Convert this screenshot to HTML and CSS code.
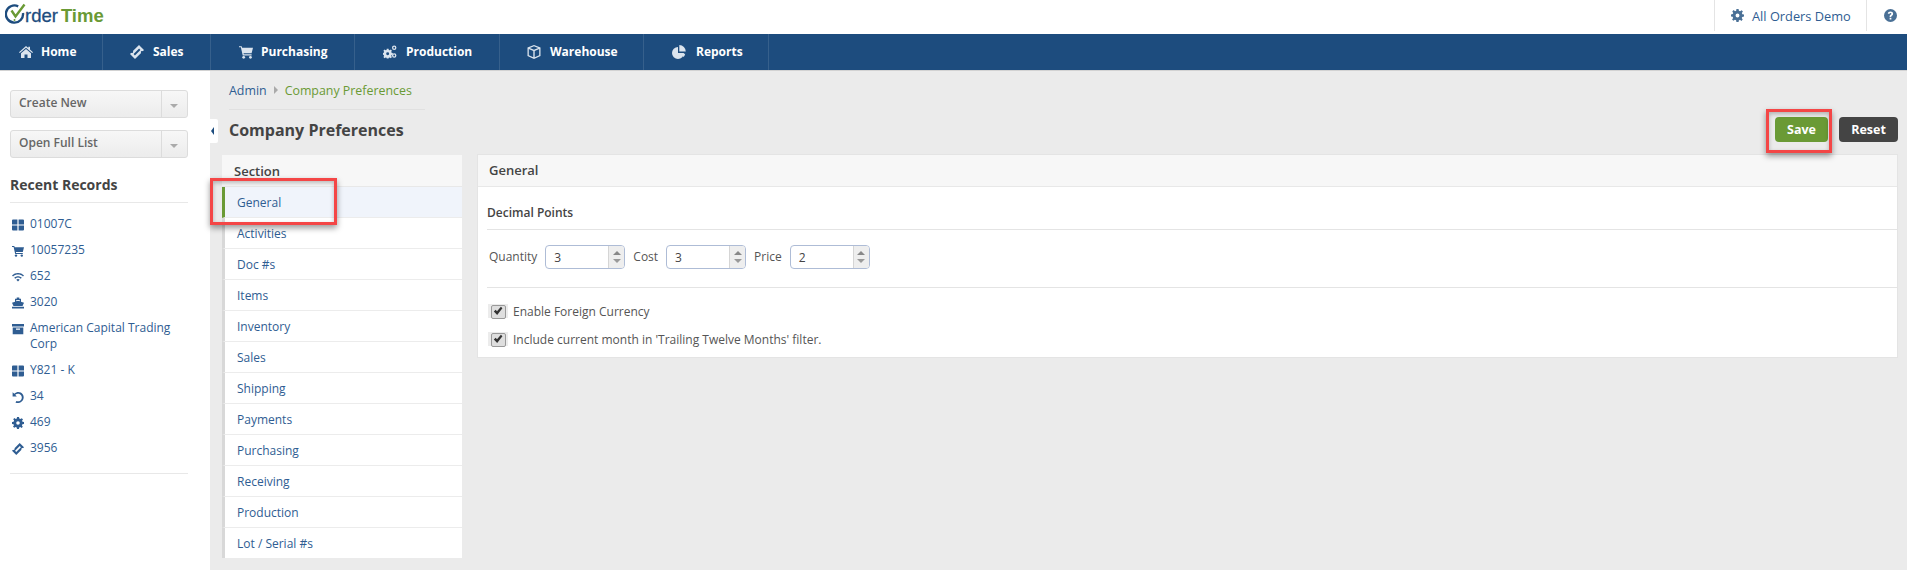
FILE: index.html
```html
<!DOCTYPE html>
<html lang="en">
<head>
<meta charset="utf-8">
<title>Company Preferences</title>
<link rel="stylesheet" href="styles.css">
</head>
<body>
<svg class="defs" width="0" height="0" aria-hidden="true">
  <defs>
    <symbol id="i-grid" viewBox="0 0 12 12"><path d="M0 1.500Q0 .5 1 .5H5.400V5.400H0ZM6.600.5H11Q12 .5 12 1.500V5.400H6.600ZM0 6.600H5.400V11.500H1Q0 11.500 0 10.500ZM6.600 6.600H12V10.500Q12 11.500 11 11.500H6.600Z"/></symbol>
    <symbol id="i-cart" viewBox="0 0 12 12"><path d="M0 1H2.300L2.700 2.300H12L10.800 7H3.900L4.100 8H10.800V9H3.200L1.600 2H0Z"/><circle cx="4" cy="10.600" r="1.200"/><circle cx="9.800" cy="10.600" r="1.200"/></symbol>
    <symbol id="i-wifi" viewBox="0 0 14 12"><path d="M0 4.200C3.800.4 10.200.4 14 4.200L12.800 5.500C9.600 2.400 4.400 2.400 1.200 5.500ZM2.600 6.800C5.100 4.400 8.900 4.400 11.400 6.800L10.200 8C8.300 6.300 5.700 6.300 3.800 8ZM5 9.200C6.200 8.200 7.800 8.200 9 9.200L7 11.300Z"/></symbol>
    <symbol id="i-ship" viewBox="0 0 14 13"><path d="M5.500 0H8.500V1.500H10.500V5L14 6.200L12.300 10H1.700L0 6.200L3.500 5V1.500H5.500ZM5 3V4.500L7 3.800L9 4.500V3ZM0 11H14V13H0Z"/></symbol>
    <symbol id="i-archive" viewBox="0 0 12 12"><path d="M0 1H12V3.600H0ZM.7 4.400H11.300V11.200H.7ZM4 5.600V6.800H8V5.600Z" fill-rule="evenodd"/></symbol>
    <symbol id="i-undo" viewBox="0 0 12 12"><path d="M.6 1.200V5.400H4.800L3.200 3.800C5 2.200 7.900 2.500 9.200 4.400C10.400 6.300 9.800 8.800 7.900 9.900C6.800 10.500 5.500 10.500 4.400 10L3.500 11.400C5.300 12.300 7.400 12.200 9.100 11.100C11.800 9.300 12.500 5.800 10.700 3.200C8.800.5 4.900.2 2.300 2.700Z"/></symbol>
    <symbol id="i-gear" viewBox="0 0 12 12"><path fill-rule="evenodd" d="M5 0H7L7.300 1.600L8.400 2.100L9.800 1.200L11 2.400L10 3.700L10.500 4.800L12 5V7L10.400 7.300L9.900 8.400L10.800 9.800L9.600 11L8.300 10L7.200 10.500L7 12H5L4.700 10.400L3.600 9.900L2.200 10.800L1 9.600L2 8.300L1.500 7.200L0 7V5L1.600 4.700L2.100 3.600L1.200 2.200L2.400 1L3.700 2L4.800 1.500ZM6 4.200A1.800 1.800 0 1 0 6 7.800A1.800 1.800 0 1 0 6 4.200Z"/></symbol>
    <symbol id="i-ticket" viewBox="0 0 14 14"><path fill-rule="evenodd" d="M9 0L14 5L12.800 6.200C12.300 5.800 11.700 5.800 11.200 6.300C10.700 6.800 10.700 7.400 11.100 7.900L5 14L0 9L1.200 7.800C1.700 8.200 2.300 8.200 2.800 7.700C3.300 7.200 3.300 6.600 2.900 6.100ZM9.100 3.600L3.600 9.100L4.900 10.400L10.400 4.900Z"/></symbol>
    <symbol id="i-home" viewBox="0 0 14 12"><path d="M7 0L9.300 2V.7H11V3.500L14 6.200L13.200 7L7 1.800L.8 7L0 6.200ZM7 3L12 7.200V12H8.500V8.500H5.500V12H2V7.200Z"/></symbol>
    <symbol id="i-gears" viewBox="0 0 15 14"><path fill-rule="evenodd" d="M4 3.500H6L6.200 4.800L7.200 5.200L8.300 4.400L9.600 5.700L8.800 6.800L9.200 7.800L10.500 8V10L9.200 10.200L8.800 11.200L9.600 12.300L8.300 13.600L7.200 12.800L6.200 13.200L6 14H4L3.800 13.200L2.800 12.800L1.700 13.600L.4 12.300L1.200 11.200L.8 10.200L0 10V8L.8 7.800L1.200 6.800L.4 5.700L1.700 4.400L2.800 5.200L3.800 4.800ZM5 7.400A1.600 1.600 0 1 0 5 10.600A1.600 1.600 0 1 0 5 7.400Z"/><path fill-rule="evenodd" d="M12 0A2.400 2.400 0 1 1 12 4.800A2.400 2.400 0 1 1 12 0ZM12 1.400A1 1 0 1 0 12 3.400A1 1 0 1 0 12 1.400ZM12 8.400A2.400 2.400 0 1 1 12 13.200A2.400 2.400 0 1 1 12 8.400ZM12 9.800A1 1 0 1 0 12 11.800A1 1 0 1 0 12 9.800Z"/></symbol>
    <symbol id="i-box" viewBox="0 0 14 14"><path fill-rule="evenodd" d="M7 0L13.500 2.500V11L7 14L.5 11V2.500ZM7 1.300L2.800 3L7 4.700L11.200 3ZM1.800 4V10.200L6.300 12.200V5.900ZM7.700 5.900V12.200L12.200 10.200V4Z"/></symbol>
    <symbol id="i-pie" viewBox="0 0 14 14"><path d="M6 2V8H12A6 6 0 1 1 6 2Z"/><path d="M7.300 0A6.500 6.500 0 0 1 13.800 6.500H7.300Z"/><path d="M8.500 8.800H13.200A6 6 0 0 1 11.600 12Z"/></symbol>
    <symbol id="i-help" viewBox="0 0 12 12"><path fill-rule="evenodd" d="M6 0A6 6 0 1 1 6 12A6 6 0 1 1 6 0ZM6 2.200C4.600 2.200 3.700 2.900 3.500 4.200L4.900 4.500C5 3.900 5.400 3.600 5.900 3.600C6.500 3.600 6.800 3.900 6.800 4.300C6.800 4.700 6.500 5 6 5.400C5.400 5.900 5.200 6.400 5.200 7.300H6.700C6.700 6.700 6.900 6.500 7.300 6.200C7.900 5.700 8.400 5.200 8.400 4.300C8.400 3 7.400 2.200 6 2.200ZM5.200 8V9.600H6.800V8Z"/></symbol>
  </defs>
</svg>

<header class="topbar">
  <a class="logo">
    <svg class="logo-mark" viewBox="0 0 24 22" aria-hidden="true">
      <path class="logo-ring" d="M13.200 3.300A8.600 8.600 0 1 0 18 10"/>
      <circle class="logo-dot" cx="9.500" cy="17" r="1"/>
      <path class="logo-check" d="M6.500 7.500L10.500 13.500L19.500 1.500"/>
    </svg>
    <span class="logo-order">rder</span><span class="logo-time">Time</span>
  </a>
  <div class="top-actions">
    <a class="top-demo"><svg class="ic-13"><use href="#i-gear"/></svg>All Orders Demo</a>
    <a class="top-help"><svg class="ic-13"><use href="#i-help"/></svg></a>
  </div>
</header>

<nav class="nav">
  <a class="nav-item nav-home"><svg class="nav-ic"><use href="#i-home"/></svg>Home</a>
  <a class="nav-item nav-sales"><svg class="nav-ic"><use href="#i-ticket"/></svg>Sales</a>
  <a class="nav-item nav-purch"><svg class="nav-ic"><use href="#i-cart"/></svg>Purchasing</a>
  <a class="nav-item nav-prod"><svg class="nav-ic"><use href="#i-gears"/></svg>Production</a>
  <a class="nav-item nav-ware"><svg class="nav-ic"><use href="#i-box"/></svg>Warehouse</a>
  <a class="nav-item nav-rep"><svg class="nav-ic"><use href="#i-pie"/></svg>Reports</a>
</nav>

<div class="body-row">
  <aside class="sidebar">
    <div class="split-btn"><span class="split-label">Create New</span><span class="split-caret"></span></div>
    <div class="split-btn"><span class="split-label">Open Full List</span><span class="split-caret"></span></div>
    <h3 class="recent-title">Recent Records</h3>
    <ul class="recent">
      <li><svg class="rec-ic"><use href="#i-grid"/></svg><a>01007C</a></li>
      <li><svg class="rec-ic"><use href="#i-cart"/></svg><a>10057235</a></li>
      <li><svg class="rec-ic"><use href="#i-wifi"/></svg><a>652</a></li>
      <li><svg class="rec-ic"><use href="#i-ship"/></svg><a>3020</a></li>
      <li><svg class="rec-ic"><use href="#i-archive"/></svg><a>American Capital Trading Corp</a></li>
      <li><svg class="rec-ic"><use href="#i-grid"/></svg><a>Y821 - K</a></li>
      <li><svg class="rec-ic"><use href="#i-undo"/></svg><a>34</a></li>
      <li><svg class="rec-ic"><use href="#i-gear"/></svg><a>469</a></li>
      <li><svg class="rec-ic"><use href="#i-ticket"/></svg><a>3956</a></li>
    </ul>
    <span class="collapse-tab"></span>
  </aside>

  <main class="main">
    <div class="crumbs"><a class="crumb-link">Admin</a><span class="crumb-sep"></span><span class="crumb-cur">Company Preferences</span></div>
    <div class="title-row">
      <h1 class="title">Company Preferences</h1>
      <div class="actions">
        <button class="btn btn-save">Save</button>
        <button class="btn btn-reset">Reset</button>
      </div>
    </div>
    <div class="columns">
      <section class="sections">
        <h2 class="sections-head">Section</h2>
        <a class="sec-row is-active">General</a>
        <a class="sec-row">Activities</a>
        <a class="sec-row">Doc #s</a>
        <a class="sec-row">Items</a>
        <a class="sec-row">Inventory</a>
        <a class="sec-row">Sales</a>
        <a class="sec-row">Shipping</a>
        <a class="sec-row">Payments</a>
        <a class="sec-row">Purchasing</a>
        <a class="sec-row">Receiving</a>
        <a class="sec-row">Production</a>
        <a class="sec-row">Lot / Serial #s</a>
      </section>
      <section class="panel">
        <h2 class="panel-head">General</h2>
        <div class="panel-body">
          <h3 class="sub-head">Decimal Points</h3>
          <div class="spin-row">
            <label class="spin-label">Quantity</label>
            <span class="spin"><span class="spin-val">3</span><span class="spin-btns"><i class="up"></i><i class="down"></i></span></span>
            <label class="spin-label">Cost</label>
            <span class="spin"><span class="spin-val">3</span><span class="spin-btns"><i class="up"></i><i class="down"></i></span></span>
            <label class="spin-label">Price</label>
            <span class="spin"><span class="spin-val">2</span><span class="spin-btns"><i class="up"></i><i class="down"></i></span></span>
          </div>
          <div class="checks">
            <label class="check"><span class="check-box"><svg viewBox="0 0 12 12" class="check-mark"><path d="M1 6.500L3.200 4.600L4.800 6.400L9.500 1L11.300 2.600L5 10.800Z"/></svg></span>Enable Foreign Currency</label>
            <label class="check"><span class="check-box"><svg viewBox="0 0 12 12" class="check-mark"><path d="M1 6.500L3.200 4.600L4.800 6.400L9.500 1L11.300 2.600L5 10.800Z"/></svg></span>Include current month in 'Trailing Twelve Months' filter.</label>
          </div>
        </div>
      </section>
    </div>
    <span class="mark mark-general"></span>
    <span class="mark mark-save"></span>
  </main>
</div>
</body>
</html>
```
FILE: styles.css
```css
* { box-sizing: border-box; }
html, body { margin: 0; height: 570px; overflow: hidden; }
body {
  font-family: "Open Sans", sans-serif;
  font-size: 12px;
  color: #444;
  background: #ebebeb;
  display: flex;
  flex-direction: column;
}
.defs { position: absolute; }
svg { fill: currentColor; display: block; flex: none; }
h1, h2, h3, ul { margin: 0; padding: 0; }
ul { list-style: none; }
a { color: #2f5d92; }

.topbar {
  height: 34px;
  background: #fff;
  display: flex;
  justify-content: space-between;
  flex: none;
}
.logo {
  display: flex;
  align-items: center;
  padding: 0 0 3px 5px;
  font-family: "Liberation Sans", sans-serif;
  font-weight: 700;
  font-size: 18.500px;
}
.logo-mark { width: 24px; height: 22px; margin: 0 -4px 3px 0; }
.logo-ring { fill: none; stroke: #1d4c7e; stroke-width: 2.400; }
.logo-dot { fill: #6a9a35; }
.logo-check { fill: none; stroke: #6a9a35; stroke-width: 2.400; }
.logo-order { color: #1d4c7e; font-weight: 400; -webkit-text-stroke: 0.3px #1d4c7e; margin-right: 3px; }
.logo-time { color: #6a9a35; }
.top-actions { display: flex; }
.top-demo {
  width: 153px;
  border-left: 1px solid #e4e4e4;
  border-right: 1px solid #e4e4e4;
  display: flex;
  align-items: center;
  gap: 8px;
  padding-left: 16px;
  height: 31px;
  font-size: 12.800px;
  color: #2f5d92;
}
.top-demo .ic-13 { color: #4a7096; }
.top-help {
  width: 40px;
  display: flex;
  align-items: center;
  padding-left: 17px;
  height: 30px;
  color: #4a7096;
}
.ic-13 { width: 13px; height: 13px; }

.nav {
  height: 37px;
  flex: none;
  display: flex;
  background: #1d4c7e;
  border-bottom: 1px solid #d2d2d2;
}
.nav-item {
  display: flex;
  align-items: center;
  color: #fff;
  font-weight: 700;
  font-size: 12px;
  border-right: 1px solid #36608c;
  padding-bottom: 1px;
}
.nav-ic { color: #dbe4ee; width: 14px; height: 14px; margin-right: 9px; }
.nav-home { width: 103px; padding-left: 19px; }
.nav-home .nav-ic, .nav-purch .nav-ic { margin-right: 8px; }
.nav-sales { width: 108px; padding-left: 27px; }
.nav-purch { width: 144px; padding-left: 28px; }
.nav-prod { width: 145px; padding-left: 28px; }
.nav-ware { width: 144px; padding-left: 27px; }
.nav-rep { width: 125px; padding-left: 28px; }
.nav-rep .nav-ic { margin-right: 10px; }

.body-row { flex: 1; display: flex; min-height: 0; }

.sidebar {
  width: 210px;
  flex: none;
  background: #fff;
  padding: 19px 22px 0 10px;
  position: relative;
}
.split-btn {
  height: 28px;
  margin-bottom: 12px;
  display: flex;
  border: 1px solid #dcdcdc;
  border-radius: 3px;
  background: linear-gradient(#f7f7f7, #ececec);
  color: #666;
  font-weight: 600;
  font-size: 12px;
}
.split-label { flex: 1; padding-left: 8px; line-height: 24px; }
.split-caret {
  width: 26px;
  border-left: 1px solid #dcdcdc;
  position: relative;
}
.split-caret::after {
  content: "";
  position: absolute;
  left: 8px;
  top: 13px;
  border: 4px solid transparent;
  border-top: 4px solid #aaa;
  border-bottom: 0;
}
.recent-title {
  font-size: 14px;
  font-weight: 700;
  color: #444;
  line-height: 19px;
  margin-top: 17px;
  padding-bottom: 8px;
  border-bottom: 1px solid #e8e8e8;
}
.recent {
  padding: 8px 0 12px;
  border-bottom: 1px solid #e8e8e8;
}
.recent li {
  display: flex;
  gap: 6px;
  padding: 5px 0 5px 2px;
  font-size: 12px;
  line-height: 16px;
}
.recent a { flex: 1; }
.rec-ic { width: 12px; height: 12px; margin-top: 3px; color: #2f5d92; }
.collapse-tab {
  position: absolute;
  left: 210px;
  top: 48px;
  width: 8px;
  height: 24px;
  background: #fff;
  border-radius: 0 2px 2px 0;
}
.collapse-tab::after {
  content: "";
  position: absolute;
  left: 1px;
  top: 8px;
  border: 4px solid transparent;
  border-right: 3px solid #1d4c7e;
  border-left: 0;
}

.main {
  flex: 1;
  min-width: 0;
  padding: 0 9px 0 12px;
  position: relative;
}
.crumbs {
  margin-left: 7px;
  width: 196px;
  height: 39px;
  border-bottom: 1px solid #e0e0e0;
  display: flex;
  align-items: center;
  font-size: 12.400px;
}
.crumb-link { color: #2f5d92; }
.crumb-sep {
  margin: 0 7px;
  border: 4px solid transparent;
  border-left: 4px solid #aaa;
  border-right: 0;
}
.crumb-cur { color: #6a9a35; }
.title-row {
  height: 45px;
  display: flex;
  justify-content: space-between;
  align-items: flex-start;
  padding-left: 7px;
}
.title {
  font-size: 16px;
  font-weight: 700;
  color: #444;
  line-height: 22px;
  margin-top: 9px;
}
.actions { display: flex; gap: 11px; margin-top: 7px; }
.btn {
  font: 700 12.500px "Open Sans", sans-serif;
  height: 25px;
  border: 0;
  border-radius: 4px;
  color: #fff;
  padding: 0;
}
.btn-save { width: 53px; background: #6a9a35; }
.btn-reset { width: 59px; background: #444; }

.columns { display: flex; align-items: flex-start; gap: 15px; }
.sections {
  width: 240px;
  flex: none;
  background: #fff;
}
.sections-head {
  height: 32px;
  font-size: 13px;
  font-weight: 600;
  color: #444;
  padding: 7px 0 0 12px;
  line-height: 18px;
  background: #f7f7f7;
  border-bottom: 1px solid #e8e8e8;
}
.sec-row {
  display: block;
  height: 31px;
  line-height: 31px;
  font-size: 12px;
  padding-left: 12px;
  border-left: 3px solid #d8d8d8;
  border-bottom: 1px solid #ececec;
  color: #2f5d92;
}
.sec-row:last-child { border-bottom: 0; height: 30px; }
.is-active {
  background: #f0f4fb;
  border-left-color: #6a9a35;
}
.panel {
  flex: 1;
  min-width: 0;
  background: #fff;
  border: 1px solid #e4e4e4;
  margin-top: -1px;
}
.panel-head {
  height: 32px;
  font-size: 13px;
  font-weight: 600;
  color: #444;
  padding: 6px 0 0 11px;
  line-height: 18px;
  background: #f7f7f7;
  border-bottom: 1px solid #e8e8e8;
}
.panel-body { padding: 0 0 0 9px; }
.sub-head {
  font-size: 12px;
  font-weight: 600;
  color: #444;
  height: 43px;
  padding-top: 17px;
  line-height: 17px;
  border-bottom: 1px solid #e4e4e4;
}
.spin-row {
  display: flex;
  align-items: center;
  height: 58px;
  border-bottom: 1px solid #e4e4e4;
  padding: 0 0 3px 2px;
  gap: 8px;
}
.spin-label { font-size: 12px; color: #555; padding-bottom: 2px; }
.spin {
  width: 80px;
  height: 24px;
  border: 1px solid #aebcd6;
  border-radius: 4px;
  display: flex;
  background: #fff;
  font-size: 12px;
  color: #444;
}
.spin-val { flex: 1; padding: 3px 0 0 8px; line-height: 17px; }
.spin-btns {
  width: 16px;
  border-left: 1px solid #d5d5d5;
  background: #eee;
  border-radius: 0 3px 3px 0;
  display: flex;
  flex-direction: column;
  align-items: center;
  justify-content: center;
  gap: 4px;
}
.up { border: 4px solid transparent; border-top: 0; border-bottom: 4px solid #888; }
.down { border: 4px solid transparent; border-bottom: 0; border-top: 4px solid #999; }
.checks { padding: 9px 0 4px 1px; }
.check {
  display: flex;
  align-items: center;
  height: 28px;
  color: #555;
  font-size: 12px;
  gap: 5px;
}
.check-box {
  width: 20px;
  height: 14px;
  background: #ececec;
  display: flex;
  align-items: center;
  justify-content: center;
  position: relative;
}
.check-box::before {
  content: "";
  position: absolute;
  left: 3px;
  top: 1px;
  width: 13px;
  height: 12px;
  background: #dedede;
  border: 1px solid #999;
  border-radius: 2px;
}
.check-mark { width: 10px; height: 10px; color: #333; position: relative; }

.mark {
  position: absolute;
  border: 3px solid #f44646;
  box-shadow: 0 3px 6px rgba(0,0,0,.4), inset 0 2px 4px rgba(0,0,0,.25);
  pointer-events: none;
}
.mark-general { left: 0; top: 107px; width: 127px; height: 47px; }
.mark-save { right: 75px; top: 38px; width: 66px; height: 44px; }
```
